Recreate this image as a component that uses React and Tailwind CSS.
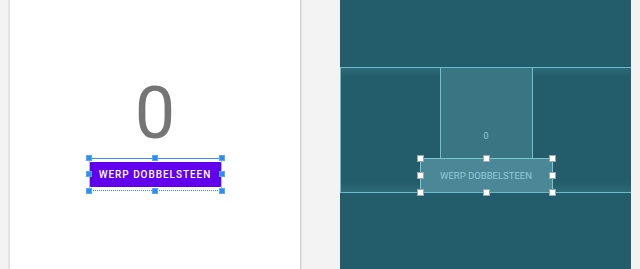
import React from "react";

function Handle({ className, white }) {
  return (
    <div
      className={
        "absolute " +
        (white ? "w-[7px] h-[7px] bg-white border border-[#9aa7ab] " : "w-[6px] h-[6px] bg-[#2a8df2] border border-[#5aa8f7] ") +
        className
      }
    />
  );
}

export default function App() {
  return (
    <div className="w-[640px] h-[269px] flex bg-[#f3f3f3] overflow-hidden" style={{ fontFamily: "Roboto, 'Noto Sans', sans-serif" }}>
      <div className="w-[8px] h-full bg-[#f3f3f3]" />
      <div className="w-[2px] h-full bg-[#e2e2e2]" />
      <div className="w-[290px] h-full bg-white flex flex-col items-center pt-[78px]">
        <div className="h-[72px] leading-[72px] text-[72px] text-[#757575] font-normal">0</div>
        <div className="relative mt-[8px] w-[133px] h-[33px] py-[4px]">
          <div className="w-full h-full bg-[#6200ee] rounded-[2px] flex items-center justify-center text-white text-[10px] font-medium tracking-[0.95px]">
            WERP DOBBELSTEEN
          </div>
          <div className="absolute left-0 right-0 top-0 h-px bg-[#3592f0]" />
          <div className="absolute left-0 right-0 bottom-0 border-b border-dotted border-[#3592f0]" />
          <div className="absolute left-0 top-0 bottom-0 w-px bg-[#8fc2f7]" />
          <div className="absolute right-0 top-0 bottom-0 w-px bg-[#8fc2f7]" />
          <Handle className="-left-[3px] -top-[3px]" />
          <Handle className="left-[63px] -top-[3px]" />
          <Handle className="-right-[3px] -top-[3px]" />
          <Handle className="-left-[3px] top-[13px]" />
          <Handle className="-right-[3px] top-[13px]" />
          <Handle className="-left-[3px] -bottom-[3px]" />
          <Handle className="left-[63px] -bottom-[3px]" />
          <Handle className="-right-[3px] -bottom-[3px]" />
        </div>
      </div>
      <div className="w-[1px] h-full bg-[#d4d4d4]" />
      <div className="w-[1px] h-full bg-[#e6e6e6]" />
      <div className="w-[38px] h-full bg-[#f3f3f3]" />
      <div className="w-[291px] h-full bg-[#235c6b] flex flex-col">
        <div className="h-[67px]" />
        <div className="h-[126px] border-y border-l border-[#6bbccb] flex flex-col items-center bg-[linear-gradient(to_bottom,#2e6a79_0px,#235c6b_9px,#235c6b_calc(100%-10px),#2e6a79_100%)]">
          <div className="w-[93px] h-[90px] bg-[#3a7584] border-x border-[#74c0cd] flex flex-col items-center justify-end pb-[17px]">
            <span className="text-[9px] leading-[10px] text-[#8ccad6]">0</span>
          </div>
          <div className="relative w-[133px] h-[34px] bg-[#4a8797] border border-[#7cc4d0] border-b-0 flex items-center justify-center">
            <span className="text-[9.5px] text-[#90ccd8] leading-[10px]">WERP DOBBELSTEEN</span>
            <Handle white className="-left-[4px] -top-[4px]" />
            <Handle white className="left-[62px] -top-[4px]" />
            <Handle white className="-right-[4px] -top-[4px]" />
            <Handle white className="-left-[4px] top-[13px]" />
            <Handle white className="-right-[4px] top-[13px]" />
            <Handle white className="-left-[4px] -bottom-[4px]" />
            <Handle white className="left-[62px] -bottom-[4px]" />
            <Handle white className="-right-[4px] -bottom-[4px]" />
          </div>
        </div>
        <div className="flex-1" />
      </div>
      <div className="w-[9px] h-full bg-[#f3f3f3]" />
    </div>
  );
}
